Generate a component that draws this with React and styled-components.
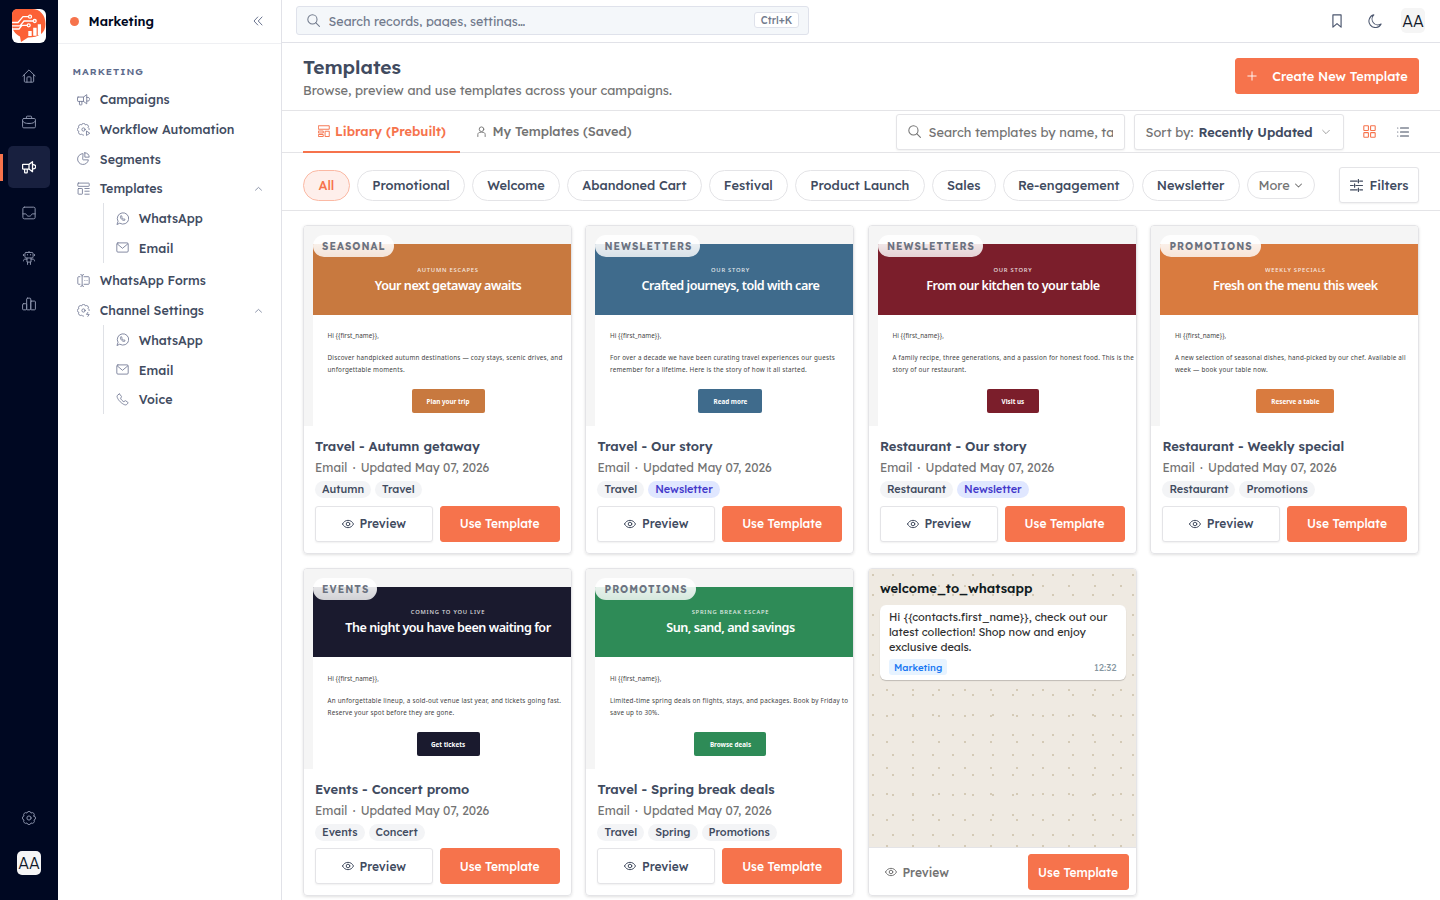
import React, {useState} from "react";
import styled, {createGlobalStyle} from "styled-components";

const GlobalStyle = createGlobalStyle`
    * {
        box-sizing: border-box;
    }

    body {
        margin: 0;
        background: #fff;
        color: #414b5f;
        font-family: Lexend, Inter, sans-serif;
        font-size: 12.8px;
        overflow: hidden;
    }

    button, input {
        font: inherit;
        color: inherit;
    }
`;

const Page = styled.div`
    display: flex;
    width: 1440px;
    height: 900px;
    overflow: hidden;
`;

const Glyph = styled.svg`
    flex: none;
    display: block;
    width: ${p => p.$size}px;
    height: ${p => p.$size}px;
    fill: none;
    stroke: currentColor;
    stroke-width: ${p => p.$stroke || 1.6};
    stroke-linecap: round;
    stroke-linejoin: round;
`;

const gearPath = "M20.5 8.5A3.6 3.6 0 0 1 20.5 15.5A3.6 3.6 0 0 1 15.5 20.5A3.6 3.6 0 0 1 8.5 20.5A3.6 3.6 0 0 1 3.5 15.5A3.6 3.6 0 0 1 3.5 8.5A3.6 3.6 0 0 1 8.5 3.5A3.6 3.6 0 0 1 15.5 3.5A3.6 3.6 0 0 1 20.5 8.5z";
const openGear = "M12 22.5A3.6 3.6 0 0 1 8.5 20.5A3.6 3.6 0 0 1 3.5 15.5A3.6 3.6 0 0 1 3.5 8.5A3.6 3.6 0 0 1 8.5 3.5A3.6 3.6 0 0 1 15.5 3.5A3.6 3.6 0 0 1 20.5 8.5A3.6 3.6 0 0 1 22.5 12";

const paths = {
    home: <><path d="M1.5 12L12 1.5L22.5 12"/><path d="M4 9.8V21a1.5 1.5 0 0 0 1.5 1.5h13A1.5 1.5 0 0 0 20 21V9.8"/><path d="M8.5 22.5V15a1.5 1.5 0 0 1 1.5-1.5h4a1.5 1.5 0 0 1 1.5 1.5v7.5"/></>,
    briefcase: <><rect x="1" y="6" width="22" height="16" rx="2"/><path d="M7.5 6V3.5A1.5 1.5 0 0 1 9 2h6a1.5 1.5 0 0 1 1.5 1.5V6M1 10.5c2 3 5 4 11 4s9-1 11-4M11 14.5h2"/></>,
    megaphone: <><path d="M2 7.5h10v8H2a1 1 0 0 1-1-1v-6a1 1 0 0 1 1-1zM12 7.5l6-4.5v17l-6-4.5M4.5 15.5V21a1 1 0 0 0 1 1H8a1 1 0 0 0 1-1v-5.5M18 8c4.5-.5 5.5 2 5.5 3.5S22.5 15.5 18 15"/></>,
    inbox: <><rect x="1.5" y="2" width="21" height="20" rx="2.5"/><path d="M1.5 13.5h4.8c.8 0 1.2.8 1.6 1.7c.8 1.7 2 2.3 4.1 2.3s3.3-.6 4.1-2.3c.4-.9.8-1.7 1.6-1.7h4.8"/></>,
    robot: <><rect x="5" y="2.5" width="14" height="9.5" rx="2"/><path d="M12 .5v2M9.3 6v.8M14.7 6v.8M2.5 6v2M21.5 6v2M8.5 12v7h7v-7M8.5 14H5c-1.5 0-2.5 1-2.5 3M15.5 14H19c1.5 0 2.5 1 2.5 3M9.5 19v4M14.5 19v4"/></>,
    chart: <><rect x="1" y="11.5" width="7" height="10.5" rx="1.5"/><rect x="8" y="2" width="7" height="20" rx="1.5"/><rect x="15" y="7" width="8" height="15" rx="1.5"/></>,
    gear: <><path d={gearPath}/><circle cx="12" cy="12" r="3.6"/></>,
    gearPlay: <><path d={openGear}/><circle cx="12" cy="12" r="3"/><path d="M17.5 15.5v7.5l5.5-3.7z"/></>,
    gearBolt: <><path d={openGear}/><circle cx="12" cy="12" r="3"/><path d="M20 15.5l-2.5 3.7h5l-2.5 3.7"/></>,
    pie: <><path d="M10.5 3A10 10 0 1 0 21 14.5H11.5a1 1 0 0 1-1-1z"/><path d="M14.5 1.5V9.5h8A8.5 8.5 0 0 0 14.5 1.5z"/></>,
    template: <><rect x="1.5" y="2" width="21" height="6" rx="1"/><rect x="2" y="12" width="8" height="10.5" rx="1"/><path d="M14.5 12H22.5M14.5 17H22.5M14.5 22.5H22.5"/></>,
    whatsapp: <><path d="M2 22.5l1.8-5.3A10.5 10.5 0 1 1 7.5 21z"/><path d="M8.5 7.5c-1 1-.5 3.5 1.8 5.9c2.4 2.3 4.9 2.8 5.9 1.8l.5-1.5l-2.2-1.2l-1.2.8c-1 0-2.6-1.6-2.6-2.6l.8-1.2L10 7z"/></>,
    mail: <><rect x="1.5" y="3.5" width="21" height="17" rx="2"/><path d="M2.5 5.5L12 13.5L21.5 5.5"/></>,
    phone: <path d="M5.5 2L2.5 4.5C.5 7 4.5 13 7.8 16.2S17 23.5 19.5 21.5L22 18.8a1 1 0 0 0-.1-1.5L18 14.5a1 1 0 0 0-1.2 0L14.5 16c-2-.5-5.5-4-6-6.5l1.5-2a1 1 0 0 0 0-1.2L7 2.2a1 1 0 0 0-1.5-.2z"/>,
    form: <><path d="M7 1c2 0 2.5 1 2.5 2.5v17C9.5 22 9 23 7 23M12 1c-2 0-2.5 1-2.5 2.5M12 23c-2 0-2.5-1-2.5-2.5M5.5 5H3a1.5 1.5 0 0 0-1.5 1.5v11A1.5 1.5 0 0 0 3 19h2.5M13 5h8a1.5 1.5 0 0 1 1.5 1.5v11A1.5 1.5 0 0 1 21 19h-8M14.5 12h.1M18.5 12h.1"/></>,
    up: <path d="M4 16.5L12 9L20 16.5"/>,
    down: <path d="M4 8L12 16L20 8"/>,
    collapse: <path d="M11.5 4L4 12L11.5 20M20 4L12.5 12L20 20"/>,
    search: <><circle cx="10" cy="10" r="8.5"/><path d="M16 16L23 23"/></>,
    bookmark: <path d="M5 1.5h14v21l-7-6l-7 6z"/>,
    moon: <path d="M10 1.5A11 11 0 1 0 22.5 17A10 10 0 0 1 10 1.5z"/>,
    plus: <path d="M12 2v20M2 12h20"/>,
    library: <><rect x="1.5" y="1.5" width="21" height="7"/><rect x="1.5" y="12" width="9" height="4"/><rect x="1.5" y="19" width="9" height="4"/><rect x="15" y="12.5" width="7.5" height="10.5"/></>,
    user: <><circle cx="12" cy="7" r="5"/><path d="M4 23v-4.5c0-3 2-5 8-5s8 2 8 5V23"/></>,
    grid: <><rect x="1.5" y="1.5" width="8.5" height="8.5" rx="1"/><rect x="14" y="1.5" width="8.5" height="8.5" rx="1"/><rect x="1.5" y="14" width="8.5" height="8.5" rx="1"/><rect x="14" y="14" width="8.5" height="8.5" rx="1"/></>,
    list: <path d="M7 4h16M7 12h16M7 20h16M1.5 4h.1M1.5 12h.1M1.5 20h.1"/>,
    filters: <path d="M1 4h12M18 4h5M15.5 1v6M1 12h5M11 12h12M8.5 9v6M1 20h12M18 20h5M15.5 17v6"/>,
    eye: <><path d="M1 12c2.5-4.8 6.3-7.3 11-7.3S20.5 7.2 23 12c-2.5 4.8-6.3 7.3-11 7.3S3.5 16.8 1 12z"/><circle cx="12" cy="12" r="3.6"/></>
};

const Icon = ({name, size = 14, stroke}) => (
    <Glyph viewBox="0 0 24 24" $size={size} $stroke={stroke}>{paths[name]}</Glyph>
);

const Rail = styled.nav`
    width: 58px;
    flex: none;
    background: #000822;
    display: flex;
    flex-direction: column;
    align-items: center;
    padding: 9px 0 25px;
`;

const Logo = styled.svg`
    width: 34px;
    height: 34px;
    display: block;
    margin-bottom: 12px;
`;

const RailItem = styled.div`
    width: 58px;
    height: 42px;
    margin-bottom: 3.6px;
    padding-left: 5px;
    border-left: 3px solid transparent;
    border-image: ${p => p.$active ? "linear-gradient(transparent 8px, #f6734c 8px, #f6734c 35px, transparent 35px) 0 0 0 3" : "none"};
`;

const RailIcon = styled.div`
    width: 42px;
    height: 42px;
    border-radius: 5px;
    display: flex;
    align-items: center;
    justify-content: center;
    color: ${p => p.$active ? "#fff" : "#8b93ab"};
    background: ${p => p.$active ? "#18203f" : "transparent"};
`;

const Spacer = styled.div`
    flex: ${p => p.$size ? `0 0 ${p.$size}px` : 1};
`;

const Avatar = styled.div`
    width: 24px;
    height: ${p => p.$tall ? 25 : 24}px;
    border-radius: 5px;
    background: #f5f5f5;
    color: #101828;
    display: flex;
    align-items: center;
    justify-content: center;
    font-size: 16px;
    font-weight: 300;
`;

const Sidebar = styled.aside`
    width: 224px;
    flex: none;
    border-right: 1px solid #e1e2e8;
`;

const SideHead = styled.div`
    height: 44px;
    border-bottom: 1px solid #eff0f3;
    display: flex;
    align-items: center;
    padding: 0 17px 1px 12px;
    color: #000822;
    font-weight: 600;
`;

const Dot = styled.span`
    width: 9px;
    height: 9px;
    border-radius: 50%;
    background: #f6734c;
    margin-right: 9.5px;
`;

const Muted = styled.span`
    display: flex;
    margin-left: auto;
    color: #6b7590;
`;

const SideLabel = styled.div`
    padding: 20.5px 14.5px 0;
    height: 40.5px;
    font-size: 9.8px;
    line-height: 13px;
    font-weight: 600;
    letter-spacing: 0.98px;
    color: #5d6b8c;
`;

const SideItem = styled.div`
    display: flex;
    align-items: center;
    height: 29.7px;
    padding: 0 18px 0 ${p => p.$sub ? 12 : 19}px;
    font-size: 12.5px;
    font-weight: 500;

    > span:first-child {
        display: flex;
        color: #737a94;
        margin-right: 9.8px;
    }
`;

const SubList = styled.div`
    margin: 0 0 3px 45px;
    border-left: 1px solid #dfe1e6;
`;

const Main = styled.main`
    flex: 1;
    min-width: 0;
`;

const TopBar = styled.header`
    height: 43px;
    border-bottom: 1px solid #e1e2e8;
    padding: 0 15px 1px 14px;
    display: flex;
    align-items: center;
    color: #4b566e;
`;

const GlobalSearch = styled.div`
    width: 513px;
    height: 29px;
    border: 1px solid #dfe2eb;
    border-radius: 3px;
    background: #f4f7fa;
    display: flex;
    align-items: center;
    padding: 0 9px 0 10px;
    margin-bottom: 1px;
    color: #717a8c;
    gap: 8.5px;
    font-size: 12.5px;
`;

const SearchHint = styled.span`
    height: 13px;
    line-height: 15px;
    overflow: hidden;
`;

const Key = styled.span`
    margin-left: auto;
    height: 16px;
    width: 45px;
    text-align: center;
    border: 1px solid #dfe2eb;
    border-radius: 3px;
    background: #fff;
    font-size: 10.2px;
    line-height: 16px;
    font-weight: 500;
`;

const TopActions = styled.div`
    display: flex;
    align-items: center;
    margin-left: auto;
`;

const TopIcon = styled.span`
    width: 38px;
    display: flex;
    justify-content: center;
`;

const Heading = styled.section`
    height: 68px;
    border-bottom: 1px solid #e4e4e7;
    padding: 0 21px;
    display: flex;
    align-items: center;
    justify-content: space-between;

    > div {
        padding-top: 3px;
    }

    > button {
        margin-bottom: 1px;
        padding-left: 1px;
    }

    h1 {
        margin: 0;
        font-size: 19.2px;
        line-height: 24px;
        font-weight: 600;
    }

    p {
        margin: 1px 0 0;
        line-height: 21px;
        color: #737373;
    }
`;

const Button = styled.button`
    height: 36px;
    width: ${p => p.$w}px;
    flex: none;
    padding: 0;
    border-radius: 3px;
    border: 1px solid ${p => p.$primary ? "#f6734c" : p.$ghost ? "transparent" : "#e4e4e7"};
    background: ${p => p.$primary ? "#f6734c" : "#fff"};
    color: ${p => p.$primary ? "#fff" : p.$ghost ? "#737373" : "#414b5f"};
    box-shadow: ${p => p.$primary || p.$ghost ? "none" : "0 1px 2px rgba(0, 0, 0, .06)"};
    font-weight: 500;
    font-size: ${p => p.$large ? 12.8 : 12}px;
    display: flex;
    align-items: center;
    justify-content: center;
    gap: ${p => p.$gap || 5.5}px;
    white-space: nowrap;
`;

const Toolbar = styled.div`
    height: 42px;
    border-bottom: 1px solid #e4e4e7;
    padding: 0 20px 0 21px;
    display: flex;
    align-items: center;
`;

const Tab = styled.div`
    align-self: stretch;
    height: 42px;
    width: ${p => p.$w}px;
    border-bottom: 2px solid ${p => p.$active ? "#f6734c" : "transparent"};
    color: ${p => p.$active ? "#f6734c" : "#737373"};
    font-weight: ${p => p.$active ? 600 : 500};
    padding-left: 1px;
    display: flex;
    align-items: center;
    justify-content: center;
    gap: 5px;
    white-space: nowrap;
`;

const Box = styled.div`
    height: 36px;
    width: ${p => p.$w}px;
    margin-left: ${p => p.$push ? "auto" : "9px"};
    border: 1px solid #e4e4e7;
    border-radius: 3px;
    box-shadow: 0 1px 2px rgba(0, 0, 0, .06);
    padding: 0 10.5px;
    display: flex;
    align-items: center;
    background: #fff;
    color: #737373;
    white-space: nowrap;

    b {
        font-weight: 600;
        color: #414b5f;
        margin: 0 8px 0 5px;
    }
`;

const TemplateInput = styled.input`
    border: 0;
    padding: 0;
    margin-left: 8px;
    width: 184px;
    outline: 0;
    background: none;

    &::placeholder {
        color: #737373;
    }
`;

const ViewIcon = styled.span`
    display: flex;
    justify-content: center;
    width: 34px;
    color: ${p => p.$active ? "#f6734c" : "#414b5f"};
`;

const Filters = styled.div`
    height: 58px;
    border-bottom: 1px solid #e4e4e7;
    padding: 7px 21px 0;
    display: flex;
    align-items: center;
    gap: 7.2px;
`;

const Pill = styled.button`
    width: ${p => p.$w}px;
    height: ${p => p.$more ? 28 : 31}px;
    flex: none;
    padding: 0;
    border: 1px solid ${p => p.$active ? "#fbb9a4" : "#e4e4e7"};
    border-radius: 16px;
    background: ${p => p.$active ? "#feefeb" : "#fff"};
    color: ${p => p.$active ? "#f6734c" : p.$more ? "#737373" : "#414b5f"};
    font-weight: ${p => p.$more ? 400 : 500};
    white-space: nowrap;
    display: flex;
    align-items: center;
    justify-content: center;
    gap: 4.5px;
`;

const Cards = styled.div`
    display: grid;
    grid-template-columns: repeat(4, 1fr);
    gap: 14.2px 13.9px;
    padding: 14px 21px;
`;

const Card = styled.article`
    height: 328.5px;
    border: 1px solid #e4e4e7;
    border-radius: 4px;
    overflow: hidden;
    box-shadow: 0 1px 3px rgba(0, 0, 0, .12);
    display: flex;
    flex-direction: column;
`;

const Preview = styled.div`
    height: 200px;
    flex: none;
    overflow: hidden;
    background: #f5f5f5;
    padding: 18px 0 0 9px;
    position: relative;
    font-family: "Noto Sans", sans-serif;
`;

const Category = styled.span`
    position: absolute;
    top: 9px;
    left: 9px;
    height: 22px;
    padding: 0 8px 0 9px;
    border-radius: 11px;
    background: linear-gradient(rgba(255, 255, 255, .95), rgba(255, 255, 255, .8));
    color: #6b7280;
    font: 700 10px/24px Lexend, Inter, sans-serif;
    letter-spacing: 1.05px;
`;

const Mail = styled.div`
    width: 270px;
    height: 182px;
    background: #fff;
    text-align: center;
    color: #444;
    font-size: 6.3px;
    line-height: 12px;
`;

const MailHead = styled.div`
    height: 70.5px;
    padding-top: 21.5px;
    background: ${p => p.$color};
    color: #fff;

    small {
        display: block;
        font-size: 5.8px;
        line-height: 9px;
        font-weight: 500;
        letter-spacing: 0.77px;
        opacity: .85;
    }

    strong {
        display: block;
        font-size: 12.6px;
        line-height: 22px;
        font-weight: 600;
        letter-spacing: -0.47px;
        white-space: nowrap;
    }
`;

const MailText = styled.p`
    margin: 0;
    padding: ${p => p.$first ? "15.5px" : "10px"} 0 0 14.5px;
    text-align: left;
    white-space: pre;
    letter-spacing: ${p => p.$first ? 0.05 : 0.22}px;
`;

const MailButton = styled.span`
    display: inline-block;
    margin-top: 13px;
    width: ${p => p.$w}px;
    height: 24px;
    border-radius: 2px;
    background: ${p => p.$color};
    color: #fff;
    font-weight: 700;
    line-height: 25px;
`;

const CardBody = styled.div`
    padding: 10px 11px;
    flex: 1;
`;

const CardTitle = styled.div`
    font-size: 13px;
    font-weight: 600;
    line-height: 21px;
`;

const Meta = styled.div`
    padding-top: 0.4px;
    line-height: 22px;
    font-size: 12px;
    color: #737373;

    i {
        margin: 0 1.9px;
        font-style: normal;
    }
`;

const Tags = styled.div`
    display: flex;
    gap: 4px;
    height: 17px;
    margin: 2.1px 0 7.2px;
`;

const Tag = styled.span`
    height: 17px;
    border-radius: 9px;
    padding: 0 7px;
    background: ${p => p.$blue ? "#e0e7ff" : "#f3f4f6"};
    color: ${p => p.$blue ? "#4338ca" : "#414b5f"};
    font-size: 10.9px;
    line-height: 16px;
    font-weight: 500;
`;

const Actions = styled.div`
    display: flex;
    justify-content: space-between;
`;

const Chat = styled.div`
    flex: 1;
    padding: 9.4px 10px 0 11px;
    background-color: #efeae2;
    background-image: radial-gradient(circle at 4px 6px, #d4cab6 1px, transparent 1.1px),
        radial-gradient(circle at 18px 17px, #d4cab6 1px, transparent 1.1px);
    background-size: 20px 20px, 26px 26px;
`;

const ChatTitle = styled.div`
    height: 27px;
    font-size: 13px;
    line-height: 21px;
    font-weight: 600;
    color: #111b21;
`;

const Bubble = styled.div`
    height: 75px;
    border-radius: 6px;
    background: #fff;
    box-shadow: 0 1px 1px rgba(0, 0, 0, .2);
    padding: 5px 9px;
    color: #303030;
    font-size: 11px;
    line-height: 15px;
    white-space: pre;
`;

const BubbleFoot = styled.div`
    display: flex;
    justify-content: space-between;
    align-items: center;
    margin-top: 4px;
    font-size: 9.6px;
    color: #8696a0;

    b {
        padding: 0 5px;
        border-radius: 3px;
        background: #e7f3ff;
        color: #1877f2;
        font-weight: 500;
        line-height: 16px;
    }
`;

const ChatActions = styled.div`
    height: 48px;
    border-top: 1px solid #e4e4e7;
    padding: 0.8px 7px 0 0;
    display: flex;
    align-items: center;
    justify-content: space-between;
`;

const railItems = ["home", "briefcase", "megaphone", "inbox", "robot", "chart"];

const menu = [
    {icon: "megaphone", label: "Campaigns"},
    {icon: "gearPlay", label: "Workflow Automation"},
    {icon: "pie", label: "Segments"},
    {icon: "template", label: "Templates", children: [["whatsapp", "WhatsApp"], ["mail", "Email"]]},
    {icon: "form", label: "WhatsApp Forms"},
    {icon: "gearBolt", label: "Channel Settings", children: [["whatsapp", "WhatsApp"], ["mail", "Email"], ["phone", "Voice"]]}
];

const categories = [
    ["All", 46.8], ["Promotional", 107.8], ["Welcome", 88], ["Abandoned Cart", 134.5], ["Festival", 79],
    ["Product Launch", 129.5], ["Sales", 64], ["Re-engagement", 131.5], ["Newsletter", 98]
];

const templates = [
    {category: "SEASONAL", color: "#c8793f", eyebrow: "AUTUMN ESCAPES", heading: "Your next getaway awaits", text: "Discover handpicked autumn destinations — cozy stays, scenic drives, and\nunforgettable moments.", cta: "Plan your trip", ctaWidth: 73, title: "Travel - Autumn getaway", tags: ["Autumn", "Travel"]},
    {category: "NEWSLETTERS", color: "#3f6b8c", eyebrow: "OUR STORY", heading: "Crafted journeys, told with care", text: "For over a decade we have been curating travel experiences our guests\nremember for a lifetime. Here is the story of how it all started.", cta: "Read more", ctaWidth: 64, title: "Travel - Our story", tags: ["Travel", "Newsletter"]},
    {category: "NEWSLETTERS", color: "#7b1e2b", eyebrow: "OUR STORY", heading: "From our kitchen to your table", text: "A family recipe, three generations, and a passion for honest food. This is the\nstory of our restaurant.", cta: "Visit us", ctaWidth: 52, title: "Restaurant - Our story", tags: ["Restaurant", "Newsletter"]},
    {category: "PROMOTIONS", color: "#d97b3f", eyebrow: "WEEKLY SPECIALS", heading: "Fresh on the menu this week", text: "A new selection of seasonal dishes, hand-picked by our chef. Available all\nweek — book your table now.", cta: "Reserve a table", ctaWidth: 78, title: "Restaurant - Weekly special", tags: ["Restaurant", "Promotions"]},
    {category: "EVENTS", color: "#1a1a2e", eyebrow: "COMING TO YOU LIVE", heading: "The night you have been waiting for", text: "An unforgettable lineup, a sold-out venue last year, and tickets going fast.\nReserve your spot before they are gone.", cta: "Get tickets", ctaWidth: 63, title: "Events - Concert promo", tags: ["Events", "Concert"]},
    {category: "PROMOTIONS", color: "#2e8b57", eyebrow: "SPRING BREAK ESCAPE", heading: "Sun, sand, and savings", text: "Limited-time spring deals on flights, stays, and packages. Book by Friday to\nsave up to 30%.", cta: "Browse deals", ctaWidth: 72, title: "Travel - Spring break deals", tags: ["Travel", "Spring", "Promotions"]}
];

const BrandLogo = () => (
    <Logo viewBox="0 0 34 34">
        <rect width="34" height="34" rx="6" fill="#fff"/>
        <path d="M6 0H20C28 0 33.5 6 33.5 15C33.5 24 27 28.5 16 28.5L9 33L8 27.5C3 25 0 21 0 15V6C0 2 2 0 6 0Z" fill="#fc6136"/>
        <g fill="none" stroke="#fff" strokeWidth="1.3">
            <path d="M0 13.5H6L11 7.7H16.5M0 16.8H8L12 12H21.2M0 20H7L10 16.3H15.2"/>
            <circle cx="18" cy="7.7" r="1.5"/>
            <circle cx="22.7" cy="12" r="1.5"/>
            <circle cx="16.7" cy="16.3" r="1.5"/>
        </g>
        <path d="M16.3 22h3.4v5h-3.4zM21.2 18.7h3.4V26.7h-3.4zM25.8 15.2h3.2V26.2h-3.2z" fill="#fff"/>
    </Logo>
);

const TemplateCard = ({item}) => (
    <Card>
        <Preview>
            <Mail>
                <MailHead $color={item.color}>
                    <small>{item.eyebrow}</small>
                    <strong>{item.heading}</strong>
                </MailHead>
                <MailText $first>{"Hi {{first_name}},"}</MailText>
                <MailText>{item.text}</MailText>
                <MailButton $w={item.ctaWidth} $color={item.color}>{item.cta}</MailButton>
            </Mail>
            <Category>{item.category}</Category>
        </Preview>
        <CardBody>
            <CardTitle>{item.title}</CardTitle>
            <Meta>Email <i>·</i> Updated May 07, 2026</Meta>
            <Tags>
                {item.tags.map(tag => <Tag key={tag} $blue={tag === "Newsletter"}>{tag}</Tag>)}
            </Tags>
            <Actions>
                <Button $w={118}><Icon name="eye" size={12} stroke={2}/>Preview</Button>
                <Button $w={120} $primary>Use Template</Button>
            </Actions>
        </CardBody>
    </Card>
);

const App = () => {

    const [category, setCategory] = useState("All");
    const [query, setQuery] = useState("");

    return (
        <Page>
            <GlobalStyle/>
            <Rail>
                <BrandLogo/>
                {railItems.map(name => (
                    <RailItem key={name} $active={name === "megaphone"}>
                        <RailIcon $active={name === "megaphone"}>
                            <Icon name={name} size={14} stroke={name === "megaphone" ? 2.2 : 1.7}/>
                        </RailIcon>
                    </RailItem>
                ))}
                <Spacer/>
                <RailItem><RailIcon><Icon name="gear" size={14} stroke={1.7}/></RailIcon></RailItem>
                <Spacer $size={8}/>
                <Avatar>AA</Avatar>
            </Rail>

            <Sidebar>
                <SideHead><Dot/>Marketing<Muted><Icon name="collapse" size={12} stroke={2}/></Muted></SideHead>
                <SideLabel>MARKETING</SideLabel>
                {menu.map(item => (
                    <React.Fragment key={item.label}>
                        <SideItem>
                            <span><Icon name={item.icon} size={13}/></span>
                            {item.label}
                            {item.children && <Muted><Icon name="up" size={9} stroke={2}/></Muted>}
                        </SideItem>
                        {item.children && (
                            <SubList>
                                {item.children.map(([icon, label]) => (
                                    <SideItem key={label} $sub><span><Icon name={icon} size={13}/></span>{label}</SideItem>
                                ))}
                            </SubList>
                        )}
                    </React.Fragment>
                ))}
            </Sidebar>

            <Main>
                <TopBar>
                    <GlobalSearch>
                        <Icon name="search" size={13} stroke={1.9}/>
                        <SearchHint>Search records, pages, settings…</SearchHint>
                        <Key>Ctrl+K</Key>
                    </GlobalSearch>
                    <TopActions>
                        <TopIcon><Icon name="bookmark" size={14} stroke={2}/></TopIcon>
                        <TopIcon><Icon name="moon" size={14} stroke={1.8}/></TopIcon>
                        <Spacer $size={7}/>
                        <Avatar $tall>AA</Avatar>
                    </TopActions>
                </TopBar>

                <Heading>
                    <div>
                        <h1>Templates</h1>
                        <p>Browse, preview and use templates across your campaigns.</p>
                    </div>
                    <Button $w={184} $primary $large $gap={15}><Icon name="plus" size={10} stroke={2.2}/>Create New Template</Button>
                </Heading>

                <Toolbar>
                    <Tab $active $w={157}><Icon name="library" size={12} stroke={1.9}/>Library (Prebuilt)</Tab>
                    <Tab $w={187}><Icon name="user" size={11} stroke={2}/>My Templates (Saved)</Tab>
                    <Box $w={229} $push>
                        <Icon name="search" size={13} stroke={1.9}/>
                        <TemplateInput
                            value={query}
                            onChange={(e) => setQuery(e.target.value)}
                            placeholder="Search templates by name, tag, or content"/>
                    </Box>
                    <Box $w={210}>Sort by:<b>Recently Updated</b><Icon name="down" size={10}/></Box>
                    <Spacer $size={8}/>
                    <ViewIcon $active><Icon name="grid" size={13} stroke={2}/></ViewIcon>
                    <ViewIcon><Icon name="list" size={12} stroke={2.2}/></ViewIcon>
                </Toolbar>

                <Filters>
                    {categories.map(([label, width]) => (
                        <Pill key={label} $w={width} $active={label === category} onClick={() => setCategory(label)}>
                            {label}
                        </Pill>
                    ))}
                    <Pill $w={68} $more>More<Icon name="down" size={9} stroke={2.8}/></Pill>
                    <Spacer/>
                    <Button $w={80} $large $gap={7}><Icon name="filters" size={13} stroke={2.2}/>Filters</Button>
                </Filters>

                <Cards>
                    {templates.map(item => <TemplateCard key={item.title} item={item}/>)}
                    <Card>
                        <Chat>
                            <ChatTitle>welcome_to_whatsapp</ChatTitle>
                            <Bubble>
                                {"Hi {{contacts.first_name}}, check out our\nlatest collection! Shop now and enjoy\nexclusive deals."}
                                <BubbleFoot><b>Marketing</b>12:32</BubbleFoot>
                            </Bubble>
                        </Chat>
                        <ChatActions>
                            <Button $w={96} $ghost><Icon name="eye" size={12} stroke={2}/>Preview</Button>
                            <Button $w={101} $primary>Use Template</Button>
                        </ChatActions>
                    </Card>
                </Cards>
            </Main>
        </Page>
    );
};

export default App;
